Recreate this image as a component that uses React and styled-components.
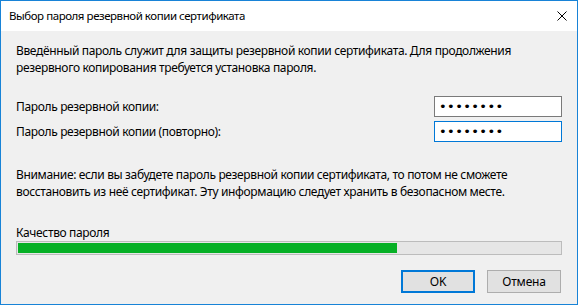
import React from 'react';
import styled, { createGlobalStyle } from 'styled-components';

const GlobalStyle = createGlobalStyle`
  html, body {
    margin: 0;
    padding: 0;
    background: #ffffff;
  }
  body {
    font-family: "Noto Sans", "Open Sans", sans-serif;
    font-size: 12px;
    color: #000000;
  }
`;

const Window = styled.div`
  width: 578px;
  height: 305px;
  box-sizing: border-box;
  border: 1px solid #1883d7;
  display: flex;
  flex-direction: column;
  background: #f0f0f0;
`;

const TitleBar = styled.div`
  height: 29px;
  flex-shrink: 0;
  background: #ffffff;
  display: flex;
  align-items: center;
  justify-content: space-between;
  padding: 0 9px 1px 8px;
`;

const Title = styled.span`
  font-size: 11.5px;
  letter-spacing: -0.45px;
`;

const CloseButton = styled.div`
  width: 12px;
  height: 12px;
  display: flex;
  align-items: center;
  justify-content: center;
`;

const Body = styled.div`
  flex: 1;
  display: flex;
  flex-direction: column;
  padding: 11px 15px 13px 15px;
`;

const Text = styled.p`
  margin: 0;
  line-height: 17px;
  letter-spacing: -0.35px;
  white-space: nowrap;
`;

const Fields = styled.div`
  display: flex;
  flex-direction: column;
  gap: 4px;
  margin-top: 20px;
  margin-bottom: 24px;
`;

const FieldRow = styled.div`
  display: flex;
  align-items: center;
  justify-content: space-between;
  height: 21px;
`;

const Label = styled.span`
  letter-spacing: -0.35px;
`;

const PasswordInput = styled.input`
  width: 128px;
  height: 21px;
  box-sizing: border-box;
  margin: 0;
  padding: 0 4px;
  border: 1px solid ${(p) => (p.$focused ? '#0078d7' : '#7a7a7a')};
  background: #ffffff;
  font-family: "DejaVu Sans", sans-serif;
  font-size: 13px;
  letter-spacing: 0.4px;
  color: #000000;
  outline: none;
`;

const QualityLabel = styled.span`
  line-height: 17px;
  letter-spacing: -0.35px;
`;

const Progress = styled.div`
  height: 14px;
  box-sizing: border-box;
  border: 1px solid #bcbcbc;
  background: #e6e6e6;
  padding: 1px;
  display: flex;
`;

const ProgressFill = styled.div`
  height: 100%;
  background: #06b025;
`;

const Buttons = styled.div`
  display: flex;
  justify-content: flex-end;
  gap: 12px;
  margin-top: 15px;
  padding-right: 1px;
`;

const Button = styled.button`
  width: 74px;
  height: 23px;
  box-sizing: border-box;
  margin: 0;
  padding: 0;
  font-family: inherit;
  font-size: 12px;
  color: #000000;
  background: #e1e1e1;
  border: ${(p) => (p.$primary ? '2px solid #0078d7' : '1px solid #adadad')};
  letter-spacing: -0.2px;
`;

const Spacer = styled.div`
  height: ${(p) => p.$h}px;
  flex-shrink: 0;
`;

export default function App() {
  const strength = 70;
  return (
    <>
      <GlobalStyle />
      <Window>
        <TitleBar>
          <Title>Выбор пароля резервной копии сертификата</Title>
          <CloseButton>
            <svg width="10" height="10" viewBox="0 0 10 10">
              <path d="M0.5 0.5 L9.5 9.5 M9.5 0.5 L0.5 9.5" stroke="#000" strokeWidth="1" fill="none" />
            </svg>
          </CloseButton>
        </TitleBar>
        <Body>
          <Text>
            Введённый пароль служит для защиты резервной копии сертификата. Для продолжения
            <br />
            резервного копирования требуется установка пароля.
          </Text>
          <Fields>
            <FieldRow>
              <Label>Пароль резервной копии:</Label>
              <PasswordInput type="password" value="12345678" readOnly />
            </FieldRow>
            <FieldRow>
              <Label>Пароль резервной копии (повторно):</Label>
              <PasswordInput type="password" value="12345678" readOnly $focused />
            </FieldRow>
          </Fields>
          <Text>
            Внимание: если вы забудете пароль резервной копии сертификата, то потом не сможете
            <br />
            восстановить из неё сертификат. Эту информацию следует хранить в безопасном месте.
          </Text>
          <Spacer $h={24} />
          <QualityLabel>Качество пароля</QualityLabel>
          <Progress>
            <ProgressFill style={{ width: `${strength}%` }} />
          </Progress>
          <Buttons>
            <Button $primary>OK</Button>
            <Button>Отмена</Button>
          </Buttons>
        </Body>
      </Window>
    </>
  );
}
